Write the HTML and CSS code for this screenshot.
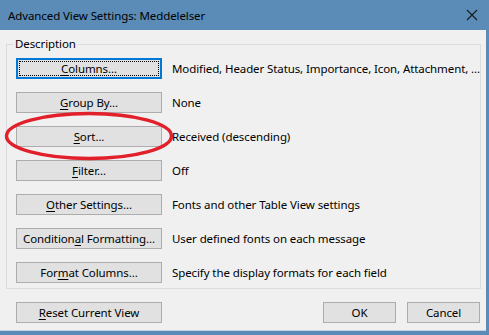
FILE: index.html
```html
<!DOCTYPE html>
<html>
<head>
<meta charset="utf-8">
<link rel="stylesheet" href="styles.css">
</head>
<body>
<div class="window">
  <div class="titlebar">
    <span class="title">Advanced View Settings: Meddelelser</span>
    <svg class="close" width="12" height="12" viewBox="0 0 12 12"><path d="M1 1 L11 11 M11 1 L1 11" stroke="#1a1a1a" stroke-width="1.1" fill="none"/></svg>
  </div>
  <div class="client">
    <fieldset class="group">
      <legend class="legend">Description</legend>
      <div class="rows">
        <div class="row"><button class="btn focused"><u>C</u>olumns...</button><span class="desc">Modified, Header Status, Importance, Icon, Attachment, ...</span></div>
        <div class="row"><button class="btn"><u>G</u>roup By...</button><span class="desc">None</span></div>
        <div class="row"><button class="btn"><u>S</u>ort...</button><span class="desc">Received (descending)</span></div>
        <div class="row"><button class="btn"><u>F</u>ilter...</button><span class="desc">Off</span></div>
        <div class="row"><button class="btn"><u>O</u>ther Settings...</button><span class="desc">Fonts and other Table View settings</span></div>
        <div class="row"><button class="btn">Condition<u>a</u>l Formatting...</button><span class="desc">User defined fonts on each message</span></div>
        <div class="row"><button class="btn">For<u>m</u>at Columns...</button><span class="desc">Specify the display formats for each field</span></div>
      </div>
    </fieldset>
    <div class="footer">
      <button class="btn"><u>R</u>eset Current View</button>
      <div class="spacer"></div>
      <button class="btn small">OK</button>
      <button class="btn small">Cancel</button>
    </div>
  </div>
  <svg class="mark" width="489" height="335" viewBox="0 0 489 335"><ellipse cx="89" cy="136" rx="82.5" ry="22.5" fill="none" stroke="#e2202b" stroke-width="3.5"/></svg>
</div>
</body>
</html>
```
FILE: styles.css
```css
html, body {
  margin: 0;
  padding: 0;
}
body {
  font-family: "Noto Sans", "Open Sans", sans-serif;
  font-size: 11.5px;
  letter-spacing: -0.1px;
  color: #000;
  background: #5b8bb7;
}
.window {
  position: relative;
  width: 489px;
  height: 335px;
  background: #5b8bb7;
  display: flex;
  flex-direction: column;
}
.titlebar {
  height: 30px;
  display: flex;
  align-items: center;
  padding-left: 8px;
  padding-right: 11px;
  box-sizing: border-box;
}
.title {
  flex: 1;
  font-size: 11.5px;
}
.close {
  display: block;
}
.client {
  background: #f0f0f0;
  margin-right: 3px;
  height: 301px;
  box-sizing: border-box;
  display: flex;
  flex-direction: column;
  border-bottom: 1px solid #c7d3de;
}
.group {
  margin: 6px 5px 0 6px;
  border: 1px solid #dcdcdc;
  padding: 0 0 5px 9px;
  min-width: 0;
}
.legend {
  padding: 0 2px;
  margin-left: -3px;
  line-height: 16px;
}
.rows {
  display: flex;
  flex-direction: column;
  gap: 13px;
  padding-top: 6px;
}
.row {
  display: flex;
  align-items: center;
  height: 21px;
}
.btn {
  position: relative;
  flex-shrink: 0;
  font-family: inherit;
  font-size: 11.5px;
  letter-spacing: -0.1px;
  color: #000;
  background: #e1e1e1;
  border: 1px solid #adadad;
  width: 146px;
  height: 21px;
  padding: 0;
  margin: 0;
  line-height: 18px;
  box-sizing: border-box;
}
.btn u {
  text-underline-offset: 2px;
}
.focused {
  border-color: #0078d7;
  box-shadow: inset 0 0 0 1px #0078d7;
}
.focused::after {
  content: "";
  position: absolute;
  inset: 2px;
  border: 1px dotted #000;
}
.desc {
  margin-left: 10px;
  white-space: nowrap;
}
.footer {
  display: flex;
  gap: 11px;
  margin: 13px 6px 0 16px;
}
.spacer {
  flex: 1;
}
.small {
  width: 73px;
}
.mark {
  position: absolute;
  left: 0;
  top: 0;
  pointer-events: none;
}
```
